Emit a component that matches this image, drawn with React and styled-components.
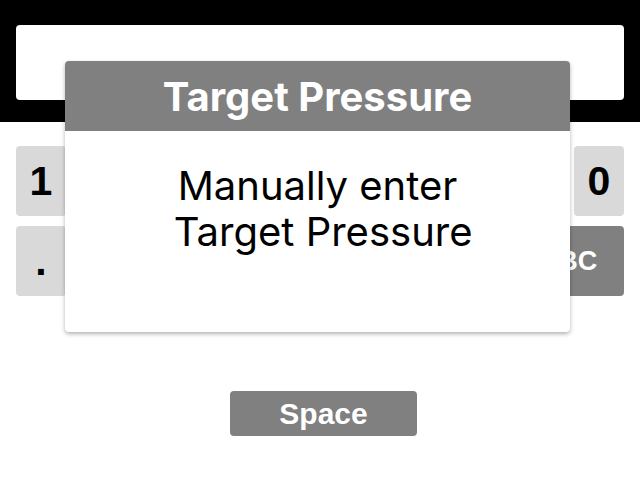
import React from 'react';
import styled, { createGlobalStyle } from 'styled-components';

const GlobalStyle = createGlobalStyle`
  html, body {
    margin: 0;
    padding: 0;
    background: #ffffff;
  }
  body {
    font-family: "Liberation Sans", Arial, sans-serif;
    width: 640px;
    height: 480px;
    overflow: hidden;
  }
`;

const Screen = styled.div`
  position: relative;
  display: flex;
  flex-direction: column;
  width: 640px;
  height: 480px;
  background: #ffffff;
`;

const TopBar = styled.div`
  background: #000000;
  padding: 25px 16px 22px;
`;

const Entry = styled.div`
  height: 75px;
  background: #ffffff;
  border-radius: 4px;
`;

const Keypad = styled.div`
  display: grid;
  grid-template-columns: repeat(10, 1fr);
  grid-auto-rows: 70px;
  column-gap: 12px;
  row-gap: 10px;
  padding: 24px 16px 0;
`;

const Key = styled.div`
  grid-column: span ${props => props.span || 1};
  display: flex;
  align-items: center;
  justify-content: center;
  border-radius: 4px;
  background: ${props => (props.dark ? '#808080' : '#d9d9d9')};
  color: ${props => (props.dark ? '#ffffff' : '#000000')};
  font-weight: bold;
  font-size: ${props => (props.dark ? '27px' : '41px')};
`;

const SpaceRow = styled.div`
  display: flex;
  justify-content: center;
  padding: 95px 0 0 7px;
`;

const SpaceKey = styled.div`
  width: 187px;
  height: 45px;
  display: flex;
  align-items: center;
  justify-content: center;
  border-radius: 4px;
  background: #808080;
  color: #ffffff;
  font-weight: bold;
  font-size: 30px;
`;

const Dialog = styled.div`
  position: absolute;
  left: 65px;
  top: 61px;
  width: 505px;
  height: 271px;
  display: flex;
  flex-direction: column;
  background: #ffffff;
  border-radius: 4px;
  box-shadow: 0 2px 4px rgba(0, 0, 0, 0.3);
  overflow: hidden;
  font-family: Inter, "Noto Sans", sans-serif;
`;

const DialogHeader = styled.div`
  height: 70px;
  display: flex;
  align-items: center;
  justify-content: center;
  background: #808080;
  color: #ffffff;
  font-weight: bold;
  font-size: 40px;
`;

const DialogBody = styled.div`
  padding-top: 32px;
  text-align: center;
  white-space: pre;
  color: #000000;
  font-size: 40px;
  line-height: 46px;
`;

const rowOne = ['1', '2', '3', '4', '5', '6', '7', '8', '9', '0'];
const rowTwo = ['.', '-', 'Q', 'W', 'E', 'R', 'T', 'Y'];

export default function App() {
  return (
    <Screen>
      <GlobalStyle />
      <TopBar>
        <Entry />
      </TopBar>
      <Keypad>
        {rowOne.map(k => (
          <Key key={k}>{k}</Key>
        ))}
        {rowTwo.map(k => (
          <Key key={k}>{k}</Key>
        ))}
        <Key dark span={2}>ABC</Key>
      </Keypad>
      <SpaceRow>
        <SpaceKey>Space</SpaceKey>
      </SpaceRow>
      <Dialog>
        <DialogHeader>Target Pressure</DialogHeader>
        <DialogBody>{'Manually enter\n Target Pressure'}</DialogBody>
      </Dialog>
    </Screen>
  );
}
